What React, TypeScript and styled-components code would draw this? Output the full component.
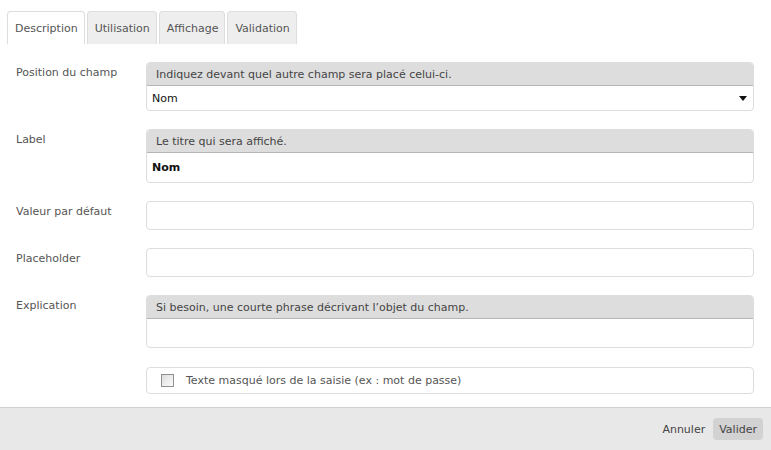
import React from "react";
import styled, { createGlobalStyle } from "styled-components";

const Global = createGlobalStyle`
  html, body { margin: 0; padding: 0; background: #fff; }
  body { font-family: "DejaVu Sans", Verdana, sans-serif; font-size: 11px; color: #555; }
  * { box-sizing: border-box; }
`;

const Page = styled.div`
  width: 771px;
  height: 450px;
  display: flex;
  flex-direction: column;
  overflow: hidden;
`;

const TabBar = styled.div`
  display: flex;
  gap: 2px;
  padding: 11px 0 0 7px;
  height: 44px;
`;

const Tab = styled.div<{ $active?: boolean }>`
  height: 33px;
  display: flex;
  align-items: center;
  padding: 0 6px 0 7px;
  border: 1px solid #ddd;
  border-bottom: none;
  border-radius: 4px 4px 0 0;
  background: ${(p) => (p.$active ? "#fff" : "#eee")};
  color: #555;
`;

const Form = styled.div`
  flex: 1;
  display: flex;
  flex-direction: column;
  gap: 18px;
  padding: 18px 17px 0 16px;
`;

const Row = styled.div`
  display: grid;
  grid-template-columns: 130px 1fr;
  align-items: start;
`;

const Label = styled.div`
  padding-top: 4px;
  line-height: 14px;
  color: #555;
`;

const Field = styled.div`
  border: 1px solid #ddd;
  border-radius: 4px;
  overflow: hidden;
  background: #fff;
`;

const Hint = styled.div`
  height: 23px;
  background: #ddd;
  border-bottom: 1px solid #b5b5b5;
  padding: 0 9px;
  display: flex;
  align-items: center;
  color: #444;
`;

const Body = styled.div<{ $h: number; $bold?: boolean }>`
  height: ${(p) => p.$h}px;
  display: flex;
  align-items: center;
  justify-content: space-between;
  padding: 0 6px 0 5px;
  color: #111;
  font-weight: ${(p) => (p.$bold ? 700 : 400)};
`;

const Caret = styled.span`
  width: 0;
  height: 0;
  border-left: 4px solid transparent;
  border-right: 4px solid transparent;
  border-top: 5px solid #111;
`;

const Input = styled.div`
  height: 29px;
  border: 1px solid #ddd;
  border-radius: 4px;
`;

const CheckRow = styled.div`
  margin-top: 1px;
  margin-left: 130px;
  height: 27px;
  border: 1px solid #ddd;
  border-radius: 4px;
  display: flex;
  align-items: center;
  padding-left: 14px;
  gap: 12px;
  color: #555;
`;

const Box = styled.span`
  width: 13px;
  height: 13px;
  border: 1px solid #8f8f8f;
  background: linear-gradient(135deg, #dcdcdc, #fbfbfb);
`;

const Footer = styled.div`
  height: 43px;
  border-top: 1px solid #cfcfcf;
  background: #e8e8e8;
  display: flex;
  justify-content: flex-end;
  align-items: center;
  gap: 2px;
  padding-right: 8px;
`;

const Btn = styled.div<{ $primary?: boolean }>`
  height: 22px;
  padding: 0 6px;
  display: flex;
  align-items: center;
  border-radius: 4px;
  background: ${(p) => (p.$primary ? "#d2d2d2" : "transparent")};
  color: #444;
`;

export default function App() {
  return (
    <Page>
      <Global />
      <TabBar>
        <Tab $active>Description</Tab>
        <Tab>Utilisation</Tab>
        <Tab>Affichage</Tab>
        <Tab>Validation</Tab>
      </TabBar>
      <Form>
        <Row>
          <Label>Position du champ</Label>
          <Field>
            <Hint>Indiquez devant quel autre champ sera placé celui-ci.</Hint>
            <Body $h={24}>
              Nom
              <Caret />
            </Body>
          </Field>
        </Row>
        <Row>
          <Label>Label</Label>
          <Field>
            <Hint>Le titre qui sera affiché.</Hint>
            <Body $h={29} $bold>Nom</Body>
          </Field>
        </Row>
        <Row>
          <Label>Valeur par défaut</Label>
          <Input />
        </Row>
        <Row>
          <Label>Placeholder</Label>
          <Input />
        </Row>
        <Row>
          <Label>Explication</Label>
          <Field>
            <Hint>Si besoin, une courte phrase décrivant l’objet du champ.</Hint>
            <Body $h={28} />
          </Field>
        </Row>
        <CheckRow>
          <Box />
          Texte masqué lors de la saisie (ex : mot de passe)
        </CheckRow>
      </Form>
      <Footer>
        <Btn>Annuler</Btn>
        <Btn $primary>Valider</Btn>
      </Footer>
    </Page>
  );
}
